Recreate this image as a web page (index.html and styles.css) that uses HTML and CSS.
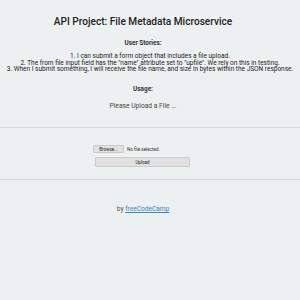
FILE: index.html
```html
<!DOCTYPE html>
<html lang="en">
<head>
    <meta charset="UTF-8">
    <meta name="viewport" content="width=device-width, initial-scale=1.0">
    <title>File Metadata Microservice</title>
    <link rel="stylesheet" href="styles.css">
</head>
<body>
    <div class="container">
        <h1>API Project: File Metadata Microservice</h1>
        <h3 class="stories-title">User Stories:</h3>
        <ul class="stories">
            <li>1. I can submit a form object that includes a file upload.</li>
            <li>2. The from file input field has the "name" attribute set to "upfile". We rely on this in testing.</li>
            <li>3. When I submit something, I will receive the file name, and size in bytes within the JSON response.</li>
        </ul>
        <h3 class="usage-title">Usage:</h3>
        <p class="usage">Please Upload a File ...</p>
    </div>
    <hr class="rule">
    <form class="upload-form">
        <div class="file-row">
            <button type="button" class="browse">Browse...</button>
            <span class="file-name">No file selected.</span>
        </div>
        <button type="button" class="submit">Upload</button>
    </form>
    <hr class="rule rule-bottom">
    <div class="footer">
        <p>by <a href="#">freeCodeCamp</a></p>
    </div>
</body>
</html>
```

FILE: styles.css
```css
body {
    margin: 0;
    padding: 0;
    font-family: 'Roboto', sans-serif;
    color: #222;
    background-color: #ecf0f1;
    text-align: center;
}
.container {
    padding: 15px 14px 0 0;
}
h1 {
    margin: 0;
    font-size: 10.1px;
    line-height: 14px;
    font-weight: 500;
}
h3 {
    margin: 0;
    font-size: 6.4px;
    line-height: 10px;
    font-weight: 700;
    color: #333;
}
.stories-title {
    margin-top: 8.5px;
}
.stories {
    list-style: none;
    margin: 5.5px -14px 0 0;
    padding: 0;
    font-size: 6.5px;
    line-height: 6.6px;
    white-space: nowrap;
}
.usage-title {
    margin-top: 11.5px;
}
.usage {
    margin: 8px 0 0;
    font-size: 6.7px;
    line-height: 8px;
    color: #444;
}
.rule {
    margin: 17px 0 0;
    border: none;
    border-top: 1px solid #d3d7d9;
}
.upload-form {
    width: 100px;
    margin: 17px 0 0 93px;
    display: flex;
    flex-direction: column;
    align-items: flex-start;
    gap: 4px;
}
.file-row {
    display: flex;
    align-items: center;
    gap: 3px;
}
.browse,
.submit {
    font-family: 'Roboto', sans-serif;
    font-size: 4.5px;
    color: #222;
    background-color: #e1e1e1;
    border: 1px solid #c9c9c9;
    border-radius: 1px;
    padding: 0;
}
.browse {
    width: 31px;
    height: 8px;
}
.file-name {
    font-size: 4.6px;
    color: #333;
}
.submit {
    width: 95px;
    height: 10px;
    margin-left: 2px;
}
.rule-bottom {
    margin-top: 12px;
}
.footer {
    margin-top: 25px;
    padding-right: 14px;
}
.footer p {
    margin: 0;
    font-size: 6.6px;
    line-height: 8px;
    color: #555;
}
.footer a {
    color: #3a86bd;
}
```
